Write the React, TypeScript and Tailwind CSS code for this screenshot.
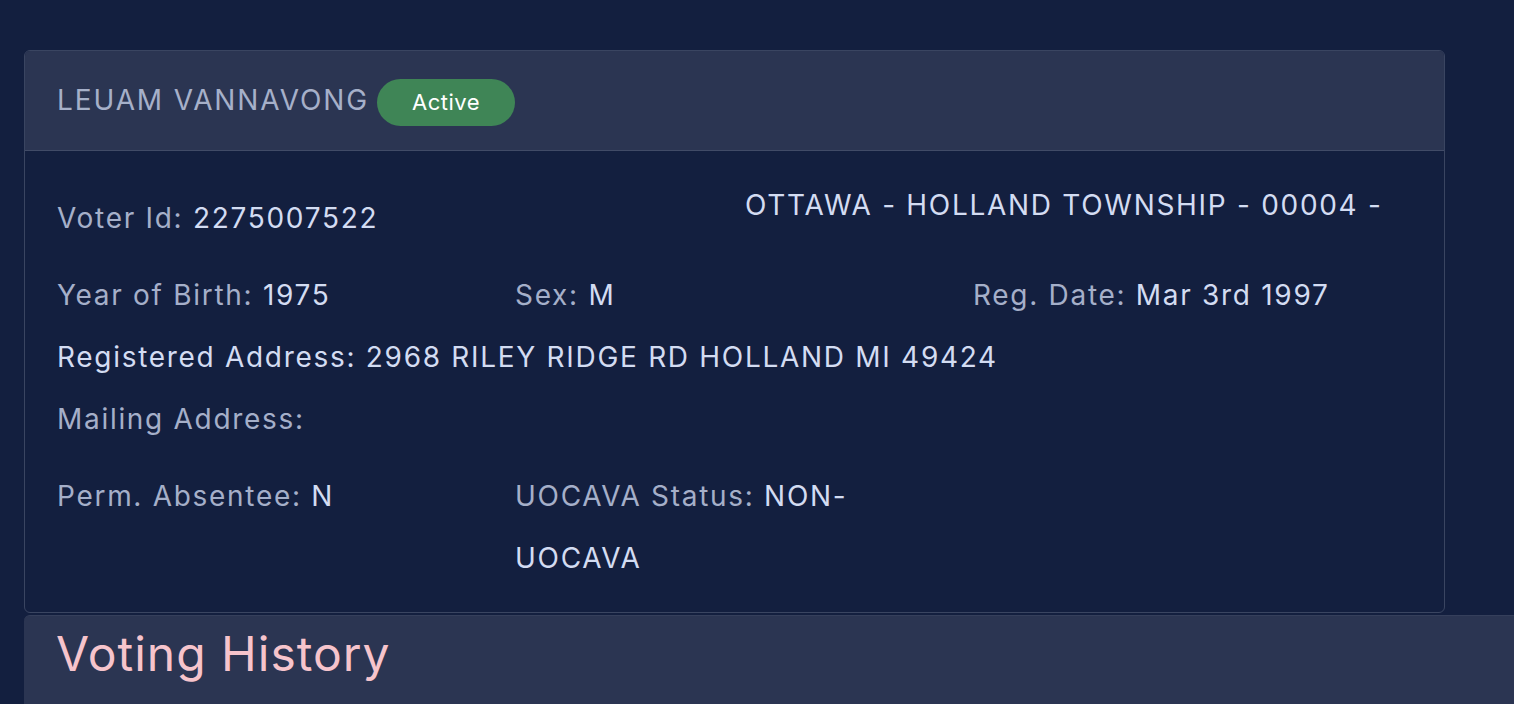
import React from 'react';

const font = { fontFamily: 'Inter, "Noto Sans", sans-serif' };

function Field({ label, value, bright }: { label: string; value?: React.ReactNode; bright?: boolean }) {
  return (
    <div className={bright ? 'text-[#d3dcf2]' : 'text-[#a5afc9]'}>
      {label}
      {value !== undefined && <span className="text-[#d3dcf2]"> {value}</span>}
    </div>
  );
}

export default function App() {
  return (
    <div className="min-h-[704px] bg-[#131f3f] pt-[50px] pl-[24px] overflow-hidden" style={font}>
      {/* Voter card */}
      <div className="w-[1421px] rounded-[6px] border border-[#3a4561] overflow-hidden">
        <div className="h-[100px] bg-[#2b3552] border-b border-[#414b67] flex items-center pl-[32px]">
          <span className="text-[28px] text-[#a6b0c9] tracking-[1.9px] -mt-[2px]">LEUAM VANNAVONG</span>
          <span className="ml-[8px] mt-[3px] h-[47px] w-[138px] rounded-full bg-[#3f8556] text-white text-[22px] tracking-[0.5px] flex items-center justify-center">
            Active
          </span>
        </div>

        <div className="pl-[32px] pr-[13px] pt-[36px] pb-[23px] text-[28px] leading-[62px] tracking-[1.7px]">
          <div className="grid grid-cols-2 items-start">
            <Field label="Voter Id:" value="2275007522" />
            <div className="text-[#d3dcf2] pl-[1px] -mt-[13px]">OTTAWA - HOLLAND TOWNSHIP - 00004 -</div>
          </div>
          <div className="grid grid-cols-3 mt-[15px]">
            <Field label="Year of Birth:" value="1975" />
            <Field label="Sex:" value="M" />
            <Field label="Reg. Date:" value="Mar 3rd 1997" />
          </div>
          <Field label="Registered Address: 2968 RILEY RIDGE RD HOLLAND MI 49424" bright />
          <Field label="Mailing Address:" />
          <div className="grid grid-cols-3 mt-[15px]">
            <Field label="Perm. Absentee:" value="N" />
            <Field
              label="UOCAVA Status:"
              value={
                <>
                  NON-
                  <br />
                  UOCAVA
                </>
              }
            />
          </div>
        </div>
      </div>

      {/* Voting history */}
      <div className="mt-[2px] w-[1520px] h-[100px] rounded-tl-[6px] bg-[#2b3552] border-t border-[#353f5b] pl-[32px] pt-[8px]">
        <h2 className="text-[48px] text-[#f6c4cc] leading-[60px] tracking-[1px]">Voting History</h2>
      </div>
    </div>
  );
}
